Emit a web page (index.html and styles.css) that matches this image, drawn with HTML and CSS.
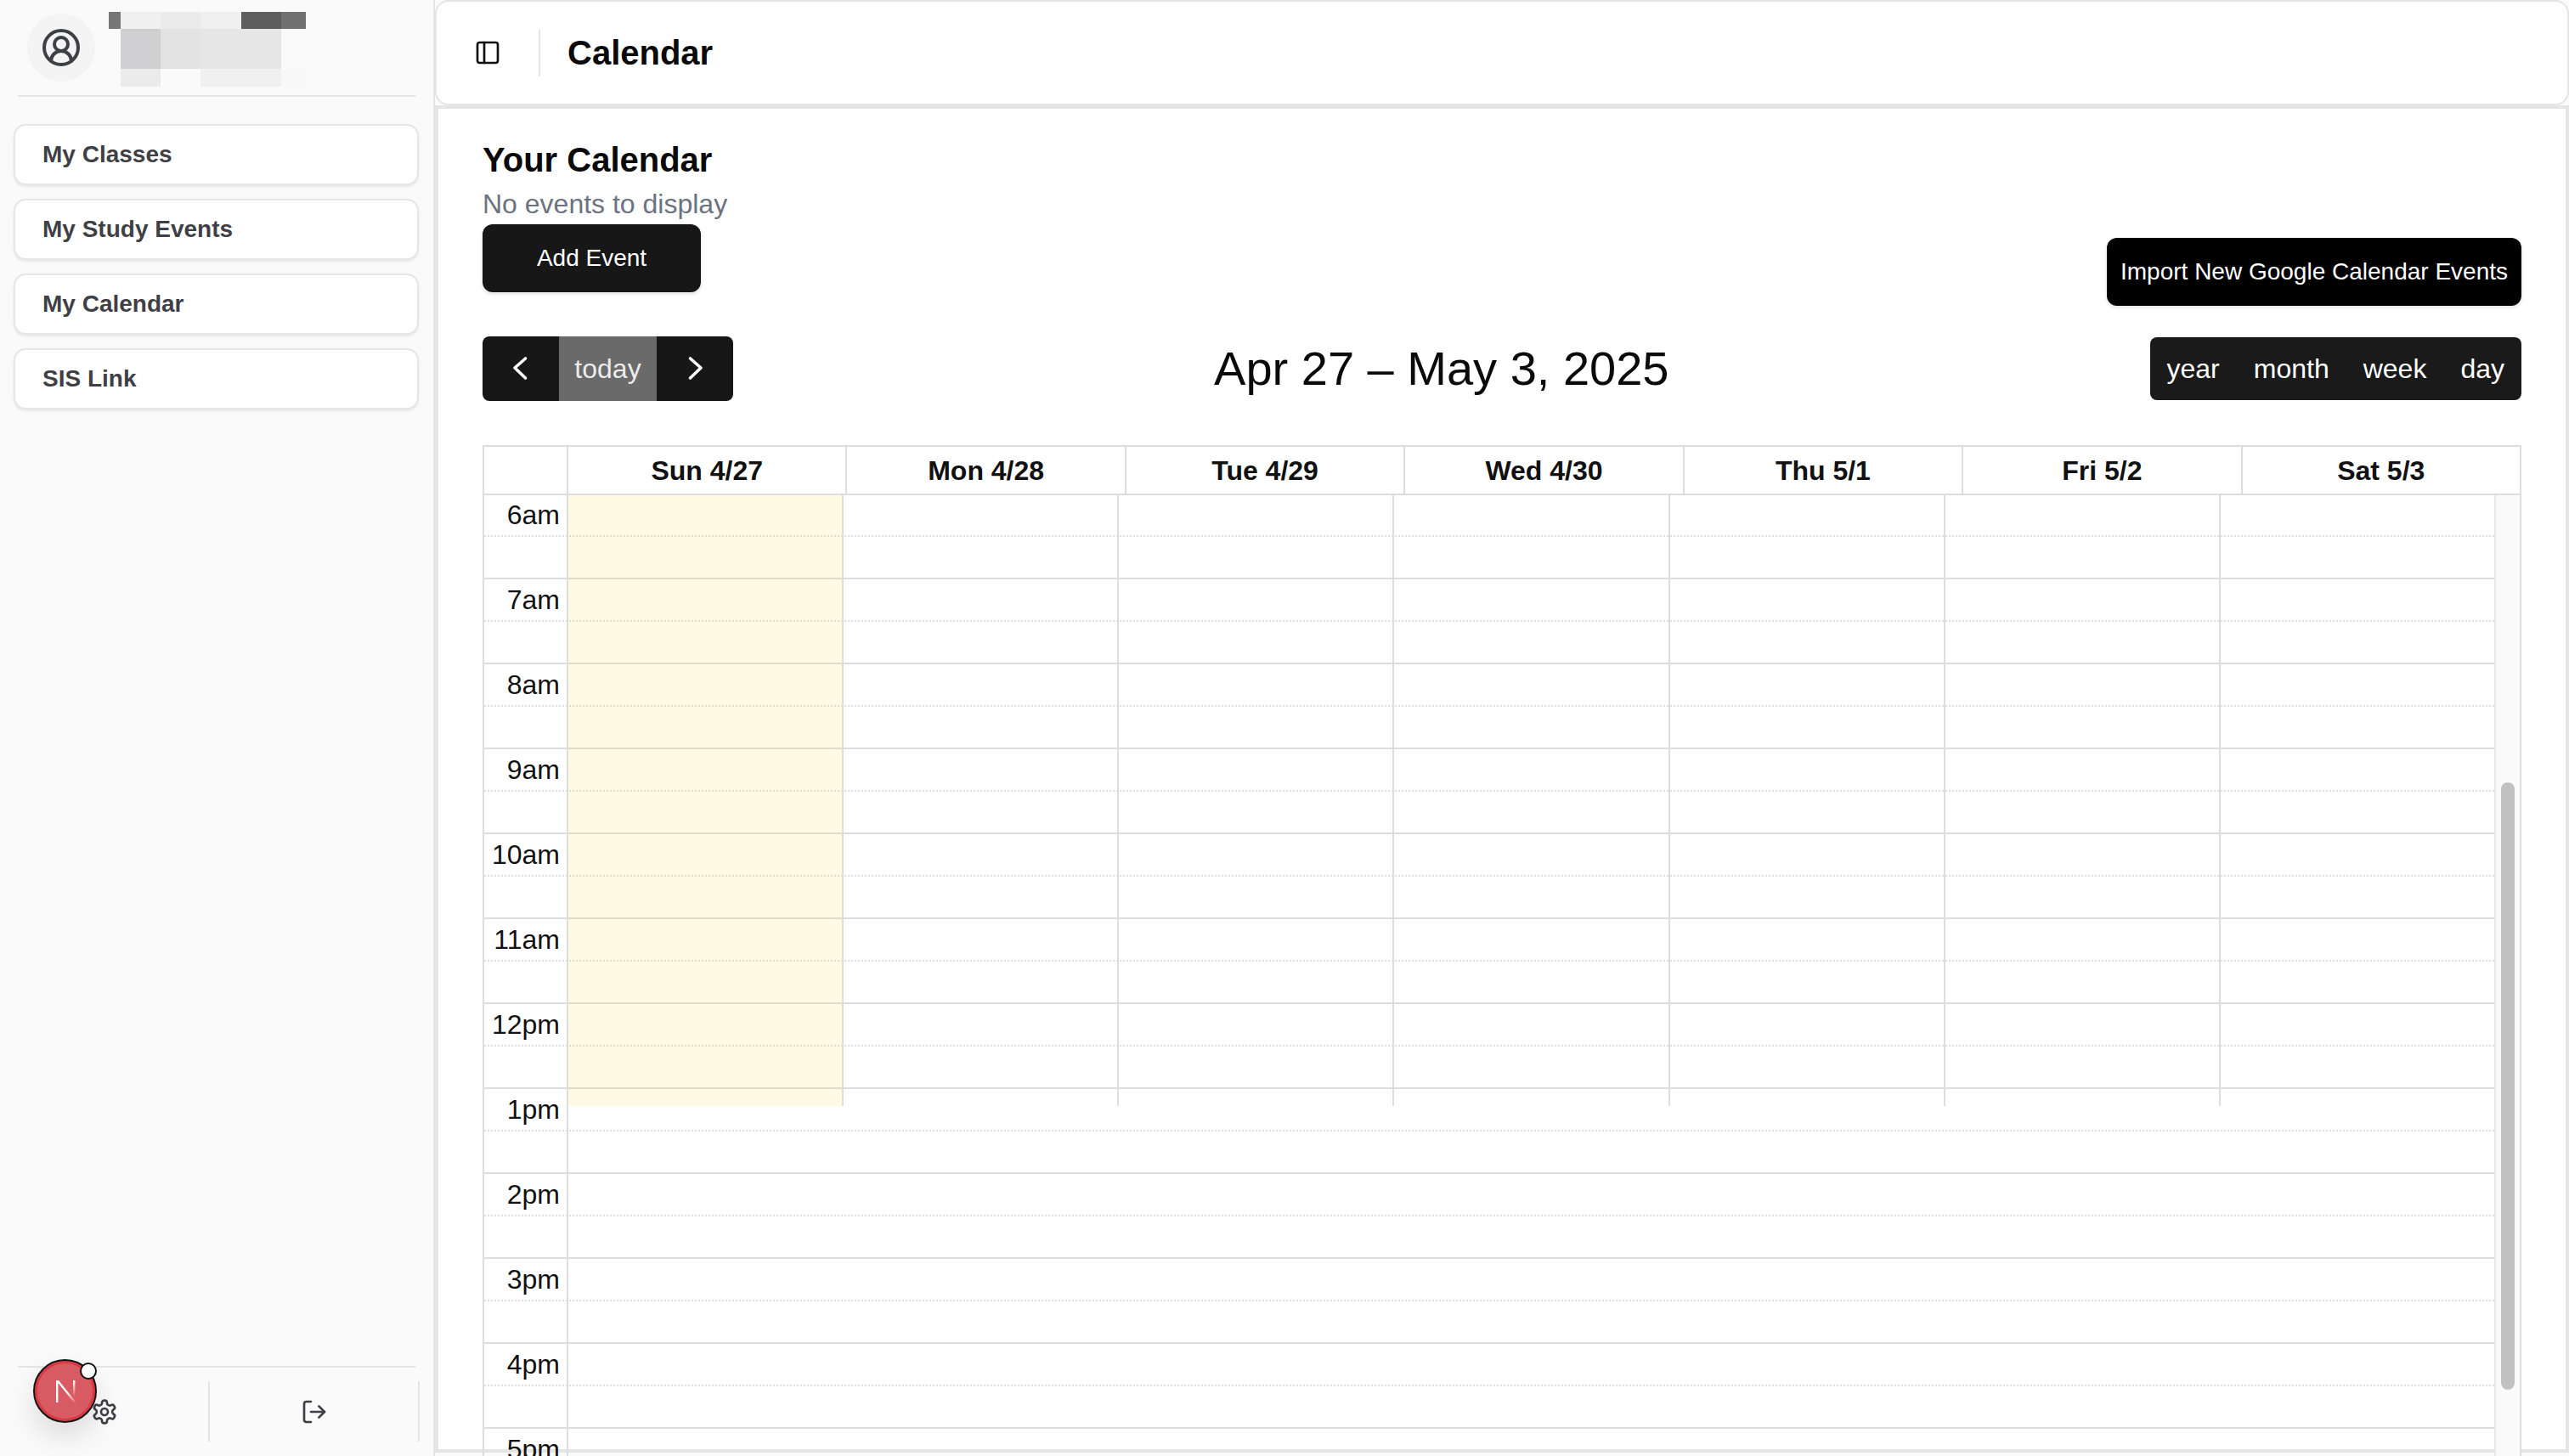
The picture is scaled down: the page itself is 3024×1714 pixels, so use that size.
FILE: index.html
```html
<!DOCTYPE html>
<html lang="en">
<head>
<meta charset="UTF-8">
<meta name="viewport" content="width=device-width, initial-scale=1.0">
<title>Calendar</title>
<link rel="stylesheet" href="styles.css">
</head>
<body>
<div class="shell">

    <!-- Sidebar -->
    <aside class="sidebar">
        <div class="profile">
            <div class="avatar">
                <svg class="icon-user" viewBox="0 0 24 24" width="48" height="48" fill="none" stroke="currentColor" stroke-width="2" stroke-linecap="round" stroke-linejoin="round">
                    <path d="M18 20a6 6 0 0 0-12 0"/>
                    <circle cx="12" cy="10" r="4"/>
                    <circle cx="12" cy="12" r="10"/>
                </svg>
            </div>
            <!-- Name is pixelated in the screenshot -->
            <div class="mosaic">
                <span class="m1"></span><span class="m2"></span><span class="m3"></span><span class="m2"></span><span class="m4"></span><span class="m5"></span>
                <span class="m0"></span><span class="m6"></span><span class="m7"></span><span class="m8"></span><span class="m8"></span><span class="m0"></span>
                <span class="m0"></span><span class="m3"></span><span class="m0"></span><span class="m2"></span><span class="m2"></span><span class="m9"></span>
            </div>
        </div>
        <nav class="side-nav">
            <a class="side-link">My Classes</a>
            <a class="side-link">My Study Events</a>
            <a class="side-link">My Calendar</a>
            <a class="side-link">SIS Link</a>
        </nav>
        <div class="side-footer">
            <div class="foot-cell">
                <svg viewBox="0 0 24 24" width="32" height="32" fill="none" stroke="currentColor" stroke-width="2" stroke-linecap="round" stroke-linejoin="round">
                    <path d="M12.22 2h-.44a2 2 0 0 0-2 2v.18a2 2 0 0 1-1 1.73l-.43.25a2 2 0 0 1-2 0l-.15-.08a2 2 0 0 0-2.73.73l-.22.38a2 2 0 0 0 .73 2.73l.15.1a2 2 0 0 1 1 1.72v.51a2 2 0 0 1-1 1.74l-.15.09a2 2 0 0 0-.73 2.73l.22.38a2 2 0 0 0 2.73.73l.15-.08a2 2 0 0 1 2 0l.43.25a2 2 0 0 1 1 1.73V20a2 2 0 0 0 2 2h.44a2 2 0 0 0 2-2v-.18a2 2 0 0 1 1-1.73l.43-.25a2 2 0 0 1 2 0l.15.08a2 2 0 0 0 2.73-.73l.22-.39a2 2 0 0 0-.73-2.73l-.15-.08a2 2 0 0 1-1-1.74v-.5a2 2 0 0 1 1-1.74l.15-.09a2 2 0 0 0 .73-2.73l-.22-.38a2 2 0 0 0-2.73-.73l-.15.08a2 2 0 0 1-2 0l-.43-.25a2 2 0 0 1-1-1.73V4a2 2 0 0 0-2-2z"/>
                    <circle cx="12" cy="12" r="3"/>
                </svg>
            </div>
            <div class="foot-cell">
                <svg viewBox="0 0 24 24" width="32" height="32" fill="none" stroke="currentColor" stroke-width="2" stroke-linecap="round" stroke-linejoin="round">
                    <path d="M9 21H5a2 2 0 0 1-2-2V5a2 2 0 0 1 2-2h4"/>
                    <polyline points="16 17 21 12 16 7"/>
                    <line x1="21" y1="12" x2="9" y2="12"/>
                </svg>
            </div>
        </div>
    </aside>

    <!-- Main -->
    <main class="main">
        <header class="topbar">
            <svg class="icon-panel" viewBox="0 0 24 24" width="32" height="32" fill="none" stroke="currentColor" stroke-width="2" stroke-linecap="round" stroke-linejoin="round">
                <rect x="3" y="3" width="18" height="18" rx="2"/>
                <path d="M9 3v18"/>
            </svg>
            <span class="topbar-sep"></span>
            <h1 class="topbar-title">Calendar</h1>
        </header>

        <section class="content">
            <div class="intro">
                <div class="intro-left">
                    <h2 class="intro-title">Your Calendar</h2>
                    <p class="intro-note">No events to display</p>
                    <button class="btn-add">Add Event</button>
                </div>
                <button class="btn-import">Import New Google Calendar Events</button>
            </div>

            <div class="cal-toolbar">
                <div class="btn-group btn-group-nav">
                    <button class="cal-btn cal-arrow">
                        <svg viewBox="0 0 32 32" width="32" height="32" fill="none" stroke="currentColor" stroke-width="3.6" stroke-linecap="round" stroke-linejoin="round"><polyline points="21.5 4 9 15 21.5 27"/></svg>
                    </button>
                    <button class="cal-btn cal-today">today</button>
                    <button class="cal-btn cal-arrow">
                        <svg viewBox="0 0 32 32" width="32" height="32" fill="none" stroke="currentColor" stroke-width="3.6" stroke-linecap="round" stroke-linejoin="round"><polyline points="10.5 4 23 15 10.5 27"/></svg>
                    </button>
                </div>
                <div class="cal-title">Apr 27 – May 3, 2025</div>
                <div class="btn-group btn-group-views">
                    <button class="cal-btn">year</button>
                    <button class="cal-btn">month</button>
                    <button class="cal-btn">week</button>
                    <button class="cal-btn">day</button>
                </div>
            </div>

            <div class="grid">
                <div class="grid-head">
                    <div class="head-axis"></div>
                    <div class="head-cell">Sun 4/27</div>
                    <div class="head-cell">Mon 4/28</div>
                    <div class="head-cell">Tue 4/29</div>
                    <div class="head-cell">Wed 4/30</div>
                    <div class="head-cell">Thu 5/1</div>
                    <div class="head-cell">Fri 5/2</div>
                    <div class="head-cell">Sat 5/3</div>
                </div>
                <div class="grid-body">
                    <div class="lanes">
                        <div class="slot"><span class="time">6am</span></div>
                        <div class="slot slot-end"><span class="time"></span></div>
                        <div class="slot"><span class="time">7am</span></div>
                        <div class="slot slot-end"><span class="time"></span></div>
                        <div class="slot"><span class="time">8am</span></div>
                        <div class="slot slot-end"><span class="time"></span></div>
                        <div class="slot"><span class="time">9am</span></div>
                        <div class="slot slot-end"><span class="time"></span></div>
                        <div class="slot"><span class="time">10am</span></div>
                        <div class="slot slot-end"><span class="time"></span></div>
                        <div class="slot"><span class="time">11am</span></div>
                        <div class="slot slot-end"><span class="time"></span></div>
                        <div class="slot"><span class="time">12pm</span></div>
                        <div class="slot slot-end"><span class="time"></span></div>
                        <div class="slot"><span class="time">1pm</span></div>
                        <div class="slot slot-end"><span class="time"></span></div>
                        <div class="slot"><span class="time">2pm</span></div>
                        <div class="slot slot-end"><span class="time"></span></div>
                        <div class="slot"><span class="time">3pm</span></div>
                        <div class="slot slot-end"><span class="time"></span></div>
                        <div class="slot"><span class="time">4pm</span></div>
                        <div class="slot slot-end"><span class="time"></span></div>
                        <div class="slot"><span class="time">5pm</span></div>
                        <div class="slot slot-end"><span class="time"></span></div>

                        <!-- Day columns lie over the slot rows -->
                        <div class="day-cols">
                            <div class="day-col day-today"></div>
                            <div class="day-col"></div>
                            <div class="day-col"></div>
                            <div class="day-col"></div>
                            <div class="day-col"></div>
                            <div class="day-col"></div>
                            <div class="day-col day-last"></div>
                        </div>
                    </div>
                    <div class="scrollbar"><div class="scroll-thumb"></div></div>
                </div>
            </div>
        </section>
    </main>
</div>

<!-- Dev indicator floats over the sidebar footer -->
<div class="dev-badge">
    <svg viewBox="0 0 26 26" width="26" height="26" fill="none">
        <defs>
            <linearGradient id="fadeDiag" x1="0" y1="0" x2="1" y2="1">
                <stop offset="0.55" stop-color="#fff"/>
                <stop offset="1" stop-color="#fff" stop-opacity="0"/>
            </linearGradient>
            <linearGradient id="fadeStem" x1="0" y1="0" x2="0" y2="1">
                <stop offset="0" stop-color="#fff"/>
                <stop offset="0.8" stop-color="#fff" stop-opacity="0"/>
            </linearGradient>
        </defs>
        <rect x="1" y="0" width="2.4" height="26" fill="#fff"/>
        <path d="M1 0h3L25 26h-3z" fill="url(#fadeDiag)"/>
        <rect x="21" y="0" width="2.4" height="24" fill="url(#fadeStem)"/>
    </svg>
    <span class="dev-dot"></span>
</div>
</body>
</html>
```

FILE: styles.css
```css
* {
    box-sizing: border-box;
}
html, body {
    height: 100%;
}
body {
    margin: 0;
    overflow: hidden;
    font-family: "Liberation Sans", Arial, sans-serif;
    color: #0a0a0a;
    background-color: #fafafa;
}
button {
    font-family: inherit;
    border: none;
    color: #fff;
    padding: 0;
}
.shell {
    display: flex;
    height: 100vh;
}

/* Sidebar */
.sidebar {
    width: 510px;
    flex-shrink: 0;
    display: flex;
    flex-direction: column;
    background-color: #fafafa;
    color: #3f3f46;
}
.profile {
    display: flex;
    gap: 16px;
    height: 114px;
    margin: 0 21px;
    padding: 14px 0 0 11px;
    border-bottom: 2px solid #e5e5e5;
}
.avatar {
    width: 80px;
    height: 80px;
    margin-top: 2px;
    border-radius: 50%;
    background-color: #f4f4f5;
    display: flex;
    align-items: center;
    justify-content: center;
}
.mosaic {
    display: grid;
    grid-template-columns: 14px 47px 47px 48px 47px 29px;
    grid-template-rows: 20px 47px 21px;
}
.m0 { background-color: #fafafa; }
.m1 { background-color: #777777; }
.m2 { background-color: #f0f0f0; }
.m3 { background-color: #ebebeb; }
.m4 { background-color: #5e5e5e; }
.m5 { background-color: #707070; }
.m6 { background-color: #d0d0d2; }
.m7 { background-color: #e3e3e3; }
.m8 { background-color: #e6e6e6; }
.m9 { background-color: #f8f8f8; }

.side-nav {
    display: flex;
    flex-direction: column;
    gap: 16px;
    margin: 32px 17px 0 16px;
}
.side-link {
    display: flex;
    align-items: center;
    height: 72px;
    padding-left: 32px;
    font-size: 28px;
    font-weight: 700;
    background-color: #fff;
    border: 2px solid #e6e6e6;
    border-radius: 14px;
    box-shadow: 0 2px 3px rgba(0, 0, 0, 0.08);
}
.side-footer {
    display: flex;
    align-items: center;
    width: 494px;
    margin-top: auto;
    margin-bottom: 17px;
    position: relative;
    height: 71px;
}
.side-footer::before {
    content: "";
    position: absolute;
    left: 21px;
    right: 5px;
    top: -18px;
    border-top: 2px solid #e5e5e5;
}
.foot-cell {
    flex: 1;
    height: 100%;
    display: flex;
    align-items: center;
    justify-content: center;
    border-right: 2px solid #e5e5e5;
}

/* Main */
.main {
    flex: 1;
    min-width: 0;
    display: flex;
    flex-direction: column;
    border-left: 2px solid #e5e5e5;
    padding-bottom: 4px;
}
.topbar {
    height: 124px;
    flex-shrink: 0;
    display: flex;
    align-items: center;
    padding-left: 44px;
    background-color: #fff;
    border: 2px solid #e5e5e5;
    border-radius: 16px;
}
.icon-panel {
    color: #111;
    flex-shrink: 0;
}
.topbar-sep {
    width: 2px;
    height: 55px;
    margin: 0 32px 0 44px;
    background-color: #e5e5e5;
}
.topbar-title {
    margin: 0;
    font-size: 40px;
    font-weight: 700;
}
.content {
    flex: 1;
    min-height: 0;
    padding: 32px 52px 0 52px;
    background-color: #fff;
    border: 4px solid #e5e5e5;
}
.intro {
    display: flex;
    justify-content: space-between;
    align-items: flex-end;
    height: 200px;
    margin-bottom: 36px;
}
.intro-left {
    align-self: flex-start;
}
.intro-title {
    margin: 0;
    font-size: 40px;
    line-height: 56px;
    font-weight: 700;
}
.intro-note {
    margin: 0;
    font-size: 32px;
    line-height: 48px;
    color: #6b7280;
}
.btn-add {
    display: block;
    width: 257px;
    height: 80px;
    font-size: 28px;
    background-color: #171717;
    border-radius: 12px;
    box-shadow: 0 2px 4px rgba(0, 0, 0, 0.12);
}
.btn-import {
    height: 80px;
    padding: 0 16px;
    font-size: 28px;
    background-color: #000;
    border-radius: 12px;
    box-shadow: 0 2px 4px rgba(0, 0, 0, 0.12);
}

/* Calendar toolbar */
.cal-toolbar {
    display: flex;
    justify-content: space-between;
    align-items: center;
    height: 76px;
    margin-bottom: 52px;
}
.cal-title {
    font-size: 56px;
    line-height: 76px;
}
.btn-group {
    display: flex;
    border-radius: 8px;
    overflow: hidden;
    background-color: #1a1a1a;
}
.btn-group-nav {
    height: 76px;
    background-color: #171717;
}
.btn-group-views {
    height: 74px;
}
.cal-btn {
    height: 100%;
    padding: 0 20px;
    font-size: 32px;
    background: transparent;
    display: flex;
    align-items: center;
    justify-content: center;
}
.cal-arrow {
    width: 90px;
    padding: 0;
}
.cal-today {
    width: 115px;
    padding: 0;
    background-color: #6a6a6a;
    color: #ececec;
}

/* Time grid */
.grid {
    border: 2px solid #ddd;
    border-bottom: none;
    width: 2400px;
}
.grid-head {
    display: flex;
    height: 57px;
    border-bottom: 2px solid #ddd;
}
.head-axis {
    width: 99px;
    border-right: 2px solid #ddd;
}
.head-cell {
    flex: 1;
    text-align: center;
    font-size: 32px;
    font-weight: 700;
    line-height: 57px;
    color: #111;
    border-right: 2px solid #ddd;
}
.head-cell:last-child {
    border-right: none;
}
.grid-body {
    display: flex;
}
.lanes {
    flex: 1;
    position: relative;
    margin-top: -1px;
}
.slot {
    display: flex;
    height: 50px;
    border-bottom: 2px dotted #ddd;
}
.slot-end {
    border-bottom: 2px solid #ddd;
}
.time {
    width: 99px;
    height: 50px;
    padding-right: 8px;
    text-align: right;
    font-size: 32px;
    line-height: 48px;
    color: #111;
    border-right: 2px solid #ddd;
}
.day-cols {
    position: absolute;
    top: 1px;
    left: 99px;
    right: 0;
    height: 719px;
    display: flex;
}
.day-col {
    flex: 1;
    border-right: 2px solid #ddd;
}
.day-last {
    border-right: none;
}
.day-today {
    background-color: rgba(255, 220, 40, 0.13);
}
.scrollbar {
    width: 30px;
    flex-shrink: 0;
    background-color: #fafafa;
    border-left: 2px solid #e8e8e8;
    padding: 338px 0 0 6px;
}
.scroll-thumb {
    width: 16px;
    height: 715px;
    border-radius: 8px;
    background-color: #c1c1c1;
}

/* Floating dev indicator */
.dev-badge {
    position: fixed;
    left: 39px;
    top: 1600px;
    width: 75px;
    height: 75px;
    display: flex;
    align-items: center;
    justify-content: center;
    padding-left: 2px;
    border-radius: 50%;
    background-color: #d85b63;
    border: 2px solid #111;
    box-shadow: inset 0 0 0 3px #d93a42, 0 16px 32px rgba(0, 0, 0, 0.12);
}
.dev-dot {
    position: absolute;
    top: 2px;
    right: -2px;
    width: 20px;
    height: 20px;
    border-radius: 50%;
    background-color: #fff;
    border: 2px solid #111;
}
```
